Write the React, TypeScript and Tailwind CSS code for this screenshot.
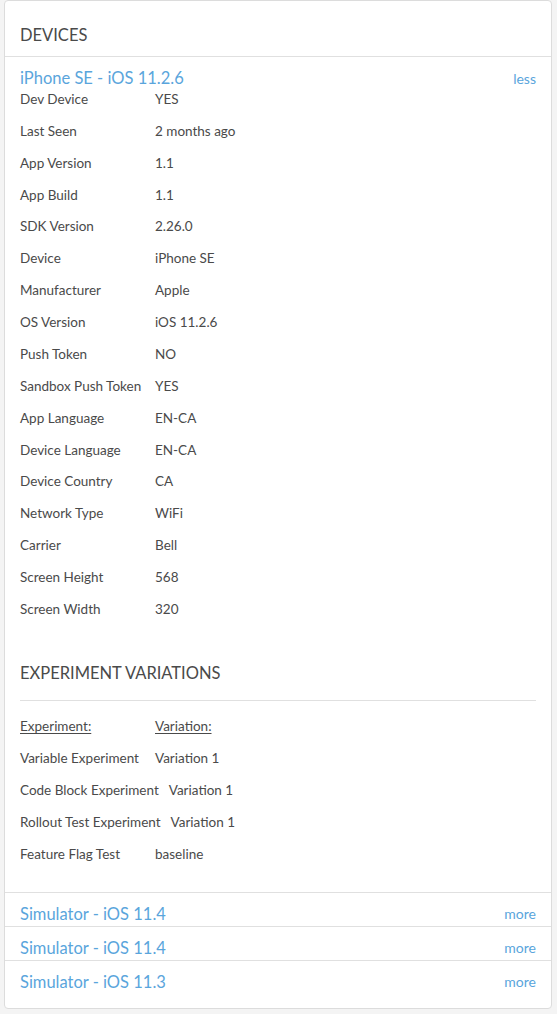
import React from "react";

const device: [string, string][] = [
  ["Dev Device", "YES"],
  ["Last Seen", "2 months ago"],
  ["App Version", "1.1"],
  ["App Build", "1.1"],
  ["SDK Version", "2.26.0"],
  ["Device", "iPhone SE"],
  ["Manufacturer", "Apple"],
  ["OS Version", "iOS 11.2.6"],
  ["Push Token", "NO"],
  ["Sandbox Push Token", "YES"],
  ["App Language", "EN-CA"],
  ["Device Language", "EN-CA"],
  ["Device Country", "CA"],
  ["Network Type", "WiFi"],
  ["Carrier", "Bell"],
  ["Screen Height", "568"],
  ["Screen Width", "320"],
];

const experiments: [string, string][] = [
  ["Variable Experiment", "Variation 1"],
  ["Code Block Experiment", "Variation 1"],
  ["Rollout Test Experiment", "Variation 1"],
  ["Feature Flag Test", "baseline"],
];

const sims = ["Simulator - iOS 11.4", "Simulator - iOS 11.4", "Simulator - iOS 11.3"];

export default function App() {
  return (
    <div
      className="w-[557px] h-[1014px] bg-[#f4f4f4] pl-[4px] pr-[5px] pt-0 overflow-hidden"
      style={{ fontFamily: "Lato, 'Noto Sans', sans-serif" }}
    >
      <div className="bg-white border border-[#dcdcdc] rounded-[4px] h-[1009px] flex flex-col">
        <div className="px-[15px] pt-[23px] pb-[10px] text-[16.5px] leading-[22px] text-[#4a4a4a] border-b border-[#e0e0e0]">
          DEVICES
        </div>
        <div className="px-[15px] pt-[10px]">
          <div className="flex justify-between items-center h-[22px]">
            <span className="text-[16.5px] text-[#5aa5dc]">iPhone SE - iOS 11.2.6</span>
            <span className="text-[14px] text-[#5aa5dc]">less</span>
          </div>
          <div className="flex flex-col">
            {device.map(([k, v], i) => (
              <div
                key={i}
                className={`flex h-[20px] items-center text-[13.5px] text-[#4a4a4a] ${i === 0 ? "" : "mt-[11.875px]"}`}
              >
                <span className="min-w-[125px] mr-[10px] whitespace-nowrap">{k}</span>
                <span>{v}</span>
              </div>
            ))}
          </div>
          <div className="pt-[43px] pb-[16px] text-[16.5px] leading-[22px] text-[#4a4a4a] border-b border-[#e0e0e0]">
            EXPERIMENT VARIATIONS
          </div>
          <div className="flex flex-col pt-[15px]">
            <div className="flex h-[20px] items-center text-[13.5px] text-[#4a4a4a]">
              <span className="min-w-[125px] mr-[10px] underline underline-offset-2">Experiment:</span>
              <span className="underline underline-offset-2">Variation:</span>
            </div>
            {experiments.map(([k, v], i) => (
              <div key={i} className="flex h-[20px] items-center text-[13.5px] text-[#4a4a4a] mt-[12px]">
                <span className="min-w-[125px] mr-[10px] whitespace-nowrap">{k}</span>
                <span>{v}</span>
              </div>
            ))}
          </div>
        </div>
        <div className="mt-[28px] flex flex-col">
          {sims.map((s, i) => (
            <div
              key={i}
              className="border-t border-[#e0e0e0] px-[15px] pt-[10px] pb-[1px] flex justify-between items-center"
            >
              <span className="text-[16.5px] leading-[22px] text-[#5aa5dc]">{s}</span>
              <span className="text-[14px] leading-[22px] text-[#5aa5dc]">more</span>
            </div>
          ))}
        </div>
      </div>
    </div>
  );
}
